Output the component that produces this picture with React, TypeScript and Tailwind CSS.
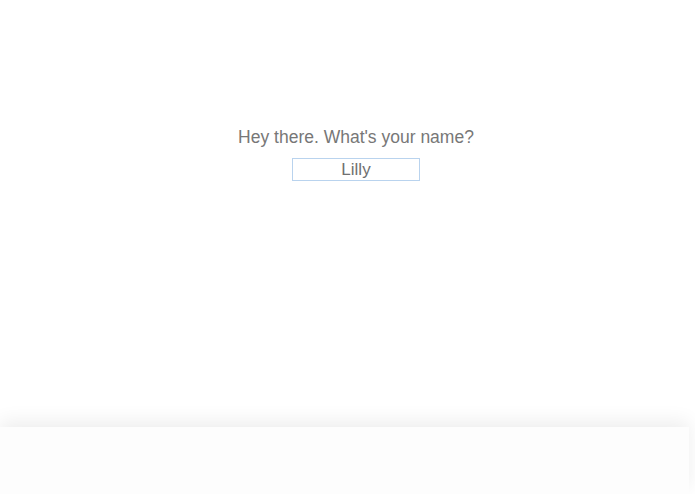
import React, { useState } from 'react';

const App = () => {
  const [name, setName] = useState('Lilly');

  return (
    <div className="h-[494px] w-full overflow-hidden bg-white font-['Liberation_Sans',Arial,sans-serif]">
      <section className="h-[427px] bg-white pt-[126px] pl-[17px] flex flex-col items-center">
        <h1 className="text-[17.5px] leading-[22px] text-[#777]">Hey there. What's your name?</h1>
        <input
          autoFocus
          value={name}
          onChange={(e) => setName(e.target.value)}
          className="mt-[10px] w-[128px] h-[23px] border border-[#b9d3ee] bg-white text-center text-[17px] text-[#707070] caret-[#555] outline-none"
        />
      </section>
      <section className="relative z-10 mr-[6px] h-[67px] bg-[#fdfdfd] shadow-[0_-6px_18px_rgba(0,0,0,0.07)]" />
    </div>
  );
};

export default App;
